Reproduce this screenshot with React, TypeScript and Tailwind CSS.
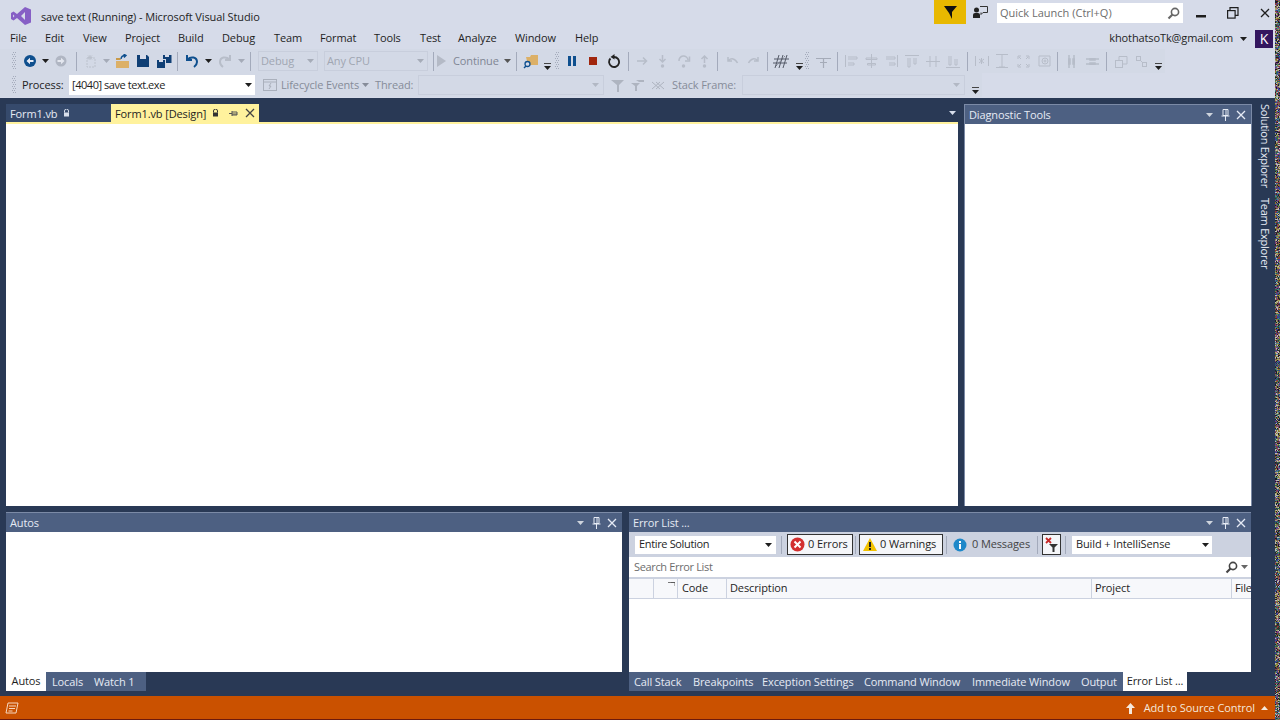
import React from "react";

const F = "font-['Open_Sans','Noto_Sans',sans-serif] text-[11px] tracking-[-0.12px] whitespace-nowrap";

function Caret({ c = "#1e1e1e", className = "" }: { c?: string; className?: string }) {
  return (
    <svg width="7" height="4" viewBox="0 0 7 4" className={`shrink-0 ${className}`}>
      <path d="M0 0h7L3.500 4z" fill={c} />
    </svg>
  );
}
function Overflow() {
  return (
    <svg width="7" height="7" viewBox="0 0 7 7" className="shrink-0 mt-[10px]">
      <rect x="0" y="0" width="7" height="1" fill="#444" />
      <path d="M0 3h7L3.500 7z" fill="#1e1e1e" />
    </svg>
  );
}
function Grip() {
  return (
    <svg width="5" height="18" viewBox="0 0 5 18" className="shrink-0">
      {Array.from({ length: 9 }).map((_, i) => (
        <g key={i} fill="#a4abbb">
          <rect x={i % 2 ? 0 : 1} y={i * 2} width="1" height="1" />
          <rect x={i % 2 ? 2 : 3} y={i * 2} width="1" height="1" />
        </g>
      ))}
    </svg>
  );
}
function Sep() {
  return <div className="w-px h-[19px] bg-[#a3aabb] shrink-0" />;
}
function C({ w, children }: { w: string; children?: React.ReactNode }) {
  return <div className={`${w} h-full flex items-center justify-center shrink-0`}>{children}</div>;
}
function Pin({ c = "#e6ebf5" }: { c?: string }) {
  return (
    <svg width="9" height="12" viewBox="0 0 9 12">
      <path d="M2 .5h5v6H2zM.5 7h8M4.500 7v5M5 1v5" stroke={c} fill="none" strokeWidth="1" />
    </svg>
  );
}
function Cross({ c = "#e6ebf5", s = 10 }: { c?: string; s?: number }) {
  return (
    <svg width={s} height={s} viewBox="0 0 10 10">
      <path d="M1 1l8 8M9 1l-8 8" stroke={c} strokeWidth="1.300" fill="none" />
    </svg>
  );
}
function Lock({ c = "#d7deeb" }: { c?: string }) {
  return (
    <svg width="7" height="8" viewBox="0 0 7 8">
      <path d="M1.500 3.500V2a2 2 0 0 1 4 0v1.500" stroke={c} fill="none" />
      <rect x="1" y="3.500" width="5" height="4" fill={c} />
    </svg>
  );
}
function Magnifier({ c = "#555" }: { c?: string }) {
  return (
    <svg width="13" height="13" viewBox="0 0 13 13" className="shrink-0">
      <circle cx="8" cy="5" r="3.600" stroke={c} strokeWidth="1.600" fill="none" />
      <path d="M5.500 7.500L1.500 11.500" stroke={c} strokeWidth="2.200" />
    </svg>
  );
}

function PanelHeader({ title }: { title: string }) {
  return (
    <div className="h-[19px] bg-[#4d6082] flex items-center pl-[4px] pr-[5px] shrink-0">
      <span className="leading-none text-[#e6ebf5] flex-1">{title}</span>
      <Caret c="#ced4dd" />
      <span className="ml-[8px] flex"><Pin /></span>
      <span className="ml-[6px] flex"><Cross /></span>
    </div>
  );
}

function Noise() {
  const colors = ["#7a3f7f", "#2c6a4c", "#8a7d2e", "#38459c", "#b9b9b9", "#8f3a3a", "#1b1b2b", "#4b8088", "#a7a26a", "#333"];
  let seed = 7;
  const rects: React.ReactNode[] = [];
  for (let y = 0; y < 720; y += 1) {
    for (let x = 0; x < 5; x += 1) {
      seed = (seed * 1103515245 + 12345) & 0x7fffffff;
      rects.push(<rect key={`${x}-${y}`} x={x} y={y} width="1" height="1" fill={colors[(seed >> 8) % colors.length]} />);
    }
  }
  return (
    <svg width="5" height="720" viewBox="0 0 5 720" className="absolute right-0 top-0">
      {rects}
    </svg>
  );
}

const menus: [string, string][] = [
  ["File", "w-[35px]"], ["Edit", "w-[38px]"], ["View", "w-[42px]"], ["Project", "w-[53px]"], ["Build", "w-[44px]"], ["Debug", "w-[52px]"],
  ["Team", "w-[46px]"], ["Format", "w-[54px]"], ["Tools", "w-[46px]"], ["Test", "w-[38px]"], ["Analyze", "w-[57px]"], ["Window", "w-[60px]"], ["Help", "w-[40px]"],
];

function Dbtn({ w, label }: { w: string; label: string }) {
  return (
    <div className={`${w} h-[20px] border border-[#c8cedc] flex items-center pl-[2px] pr-[3px] text-[#a0a6b2] shrink-0`}>
      <span className="flex-1">{label}</span>
      <Caret c="#a6acb8" />
    </div>
  );
}

function Toolbar1() {
  const gray = "#a5abb8";
  const dim = "#b7bdc9";
  return (
    <div className="h-[24px] flex items-center pl-[8px] w-[1165px] bg-[#d3d9e6]">
      <C w="w-[12px]"><Grip /></C>
      <C w="w-[20px]">
        <svg width="12" height="12" viewBox="0 0 12 12">
          <circle cx="6" cy="6" r="6" fill="#0e4f8e" />
          <path d="M2.500 6L6 2.800V5h3.500v2H6v2.200z" fill="#e6ebf5" />
        </svg>
      </C>
      <C w="w-[10px]"><Caret /></C>
      <C w="w-[22px]">
        <svg width="12" height="12" viewBox="0 0 12 12">
          <circle cx="6" cy="6" r="5.500" fill="#b0b6c3" />
          <path d="M9.500 6L6 2.800V5H2.500v2H6v2.200z" fill="#e4e7ef" />
        </svg>
      </C>
      <C w="w-[8px]"><Sep /></C>
      <C w="w-[22px]">
        <svg width="14" height="14" viewBox="0 0 14 14">
          <path d="M3 4h8v9H3z" fill="none" stroke="#bcc2cd" strokeDasharray="2 1" />
          <path d="M6 1v5M3.500 3.500h5M4 1.500l4 4M8 1.500l-4 4" stroke="#bcc2cd" />
        </svg>
      </C>
      <C w="w-[8px]"><Caret c={gray} /></C>
      <C w="w-[24px]">
        <svg width="15" height="15" viewBox="0 0 15 15">
          <path d="M1 7h13v7H1z" fill="#dcb067" />
          <path d="M1 6V4h4l1 2z" fill="#c89a4a" />
          <path d="M6 5a4 4 0 0 1 4-3.500M8.500 0l2.500 1.500-2 2" stroke="#0e4f8e" fill="none" strokeWidth="1.400" />
        </svg>
      </C>
      <C w="w-[18px]">
        <svg width="12" height="12" viewBox="0 0 12 12">
          <path d="M0 0h10l2 2v10H0z" fill="#0f3f75" />
          <rect x="3" y="0" width="6" height="4" fill="#d6dbe9" />
        </svg>
      </C>
      <C w="w-[24px]">
        <svg width="15" height="13" viewBox="0 0 15 13">
          <path d="M0 5h8v8H0z" fill="#0f3f75" />
          <path d="M6 0h8.500v8H9V4H6z" fill="#0f3f75" />
          <rect x="2" y="5" width="4" height="2" fill="#d6dbe9" />
          <rect x="8" y="0" width="4" height="2" fill="#d6dbe9" />
        </svg>
      </C>
      <C w="w-[2px]"><Sep /></C>
      <C w="w-[28px]">
        <svg width="14" height="14" viewBox="0 0 14 14">
          <path d="M2 1v5h5" stroke="#0e4f8e" strokeWidth="2" fill="none" />
          <path d="M2.500 5.500C6 2 12 3 12 8c0 2-1 3.500-3 5" stroke="#0e4f8e" strokeWidth="2" fill="none" />
        </svg>
      </C>
      <C w="w-[4px]"><Caret /></C>
      <C w="w-[30px]">
        <svg width="14" height="14" viewBox="0 0 14 14">
          <path d="M12 1v5H7" stroke={dim} strokeWidth="2" fill="none" />
          <path d="M11.500 5.500C8 2 2 3 2 8c0 2 1 3.500 3 5" stroke={dim} strokeWidth="2" fill="none" />
        </svg>
      </C>
      <C w="w-[2px]"><Caret c={gray} /></C>
      <C w="w-[16px]"><Sep /></C>
      <Dbtn w="w-[60px]" label="Debug" />
      <div className="w-[6px] shrink-0" />
      <Dbtn w="w-[104px]" label="Any CPU" />
      <C w="w-[10px]"><Sep /></C>
      <C w="w-[6px]">
        <svg width="9" height="12" viewBox="0 0 9 12" className="shrink-0"><path d="M0 0l9 6-9 6z" fill="#b4bac6" /></svg>
      </C>
      <div className="w-[60px] shrink-0 pl-[9px] text-[#7f8694]">Continue</div>
      <C w="w-[6px]"><Caret c="#555" /></C>
      <C w="w-[12px]"><Sep /></C>
      <C w="w-[18px]">
        <svg width="16" height="15" viewBox="0 0 16 15">
          <path d="M3 3h4l1-2h7v10H5z" fill="#dcb067" />
          <circle cx="4.500" cy="10" r="2.500" stroke="#0e4f8e" strokeWidth="1.300" fill="#d6dbe9" />
          <path d="M3 12l-2 2" stroke="#0e4f8e" strokeWidth="1.500" />
        </svg>
      </C>
      <C w="w-[14px]"><Overflow /></C>
      <C w="w-[6px]"><Grip /></C>
      <C w="w-[24px]">
        <svg width="8" height="10" viewBox="0 0 8 10">
          <rect width="3" height="10" fill="#0e4f8e" />
          <rect x="5" width="3" height="10" fill="#0e4f8e" />
        </svg>
      </C>
      <C w="w-[18px]"><div className="w-[8px] h-[8px] bg-[#a1260d]" /></C>
      <C w="w-[24px]">
        <svg width="14" height="14" viewBox="0 0 14 14">
          <path d="M3.500 4.500A5 5 0 1 0 7 3" stroke="#222" strokeWidth="1.800" fill="none" />
          <path d="M7.500 0v5.500L3.500 3z" fill="#222" />
        </svg>
      </C>
      <C w="w-[4px]"><Sep /></C>
      <C w="w-[24px]">
        <svg width="12" height="12" viewBox="0 0 12 12" fill="none" stroke={dim} strokeWidth="1.500"><path d="M1 6h9M7 2.500L10.500 6 7 9.500" /></svg>
      </C>
      <C w="w-[16px]">
        <svg width="9" height="13" viewBox="0 0 9 13" fill="none" stroke={dim} strokeWidth="1.500"><path d="M4.500 0v6M1.500 4l3 3 3-3" /><circle cx="4.500" cy="11" r="1" fill={dim} /></svg>
      </C>
      <C w="w-[28px]">
        <svg width="13" height="13" viewBox="0 0 13 13" fill="none" stroke={dim} strokeWidth="1.500"><path d="M1 6a4.500 4.500 0 0 1 9-1M11.500 1.500V6H7" /><circle cx="5.500" cy="11" r="1" fill={dim} /></svg>
      </C>
      <C w="w-[12px]">
        <svg width="9" height="13" viewBox="0 0 9 13" fill="none" stroke={dim} strokeWidth="1.500"><path d="M4.500 8V1M1.500 4l3-3 3 3" /><circle cx="4.500" cy="11" r="1" fill={dim} /></svg>
      </C>
      <C w="w-[14px]"><Sep /></C>
      <C w="w-[16px]">
        <svg width="13" height="10" viewBox="0 0 13 10" fill="none" stroke={dim} strokeWidth="1.500"><path d="M2 1v4h4M2.500 4.500C5 2 9 2 11.500 7" /></svg>
      </C>
      <C w="w-[26px]">
        <svg width="13" height="10" viewBox="0 0 13 10" fill="none" stroke={dim} strokeWidth="1.500"><path d="M11 1v4H7M10.500 4.500C8 2 4 2 1.500 7" /></svg>
      </C>
      <C w="w-[2px]"><Sep /></C>
      <C w="w-[26px]">
        <svg width="17" height="15" viewBox="0 0 17 15" fill="none" stroke="#555b68">
          <path d="M6 1L2 14M10 1L6 14M14 1l-4 13M1 5h15M0 9h14" />
          <path d="M3 12l9-10" strokeDasharray="1 1" />
        </svg>
      </C>
      <C w="w-[10px]"><Overflow /></C>
      <C w="w-[6px]"><Grip /></C>
      <C w="w-[26px]">
        <svg width="15" height="13" viewBox="0 0 15 13" fill="none" stroke={gray}><path d="M0 3.500h15M7.500 3.500V13M4 7.500h7" strokeWidth="1.200" /></svg>
      </C>
      <C w="w-[2px]"><Sep /></C>
      <C w="w-[26px]">
        <svg width="13" height="14" viewBox="0 0 13 14" fill="none" stroke={dim}><path d="M.5 1v12M3 3h9v2H3M3 9h6v2H3" /></svg>
      </C>
      <C w="w-[14px]">
        <svg width="13" height="14" viewBox="0 0 13 14" fill="none" stroke={dim}><path d="M6.500 0v14M1 4h11v1.500H1zM2.500 9.500h8V11h-8z" /></svg>
      </C>
      <C w="w-[26px]">
        <svg width="13" height="14" viewBox="0 0 13 14" fill="none" stroke={dim}><path d="M12.500 1v12M1 3h9v2H1M4 9h6v2H4" /></svg>
      </C>
      <C w="w-[16px]">
        <svg width="14" height="13" viewBox="0 0 14 13" fill="none" stroke={dim}><path d="M0 .5h14M3 3v9h2V3M9 3v6h2V3" /></svg>
      </C>
      <C w="w-[26px]">
        <svg width="14" height="13" viewBox="0 0 14 13" fill="none" stroke={dim}><path d="M0 6.500h14M4 1v11M10 1v11" /></svg>
      </C>
      <C w="w-[14px]">
        <svg width="14" height="13" viewBox="0 0 14 13" fill="none" stroke={dim}><path d="M0 12.500h14M3 1v9h2V1M9 4v6h2V4" /></svg>
      </C>
      <C w="w-[14px]"><Sep /></C>
      <C w="w-[16px]">
        <svg width="14" height="12" viewBox="0 0 14 12" fill="none" stroke={dim}><path d="M.5 1v10M13.500 1v10M4 4l5 4M9 4L4 8M6.500 3v6" /></svg>
      </C>
      <C w="w-[24px]">
        <svg width="14" height="14" viewBox="0 0 14 14" fill="none" stroke={dim}><path d="M1 .5h12M1 13.500h12M7 1v12M4 13h6" /></svg>
      </C>
      <C w="w-[18px]">
        <svg width="13" height="13" viewBox="0 0 13 13" fill="none" stroke={dim}><path d="M1 4V1h3M9 1h3v3M1 9v3h3M12 9v3H9M2 2l2 2M11 2L9 4M2 11l2-2M11 11L9 9" /></svg>
      </C>
      <C w="w-[24px]">
        <svg width="13" height="14" viewBox="0 0 13 14" fill="none" stroke={dim}><path d="M1 2h11v10H1z" /><circle cx="7" cy="7" r="3" /><circle cx="7" cy="7" r="1" /></svg>
      </C>
      <C w="w-[2px]"><Sep /></C>
      <C w="w-[26px]">
        <svg width="7" height="13" viewBox="0 0 7 13" fill="none" stroke={dim} strokeWidth="1.500"><path d="M1 0v13M6 0v13" /><rect x="0" y="4" width="2" height="5" fill={dim} /><rect x="5" y="4" width="2" height="5" fill={dim} /></svg>
      </C>
      <C w="w-[16px]">
        <svg width="13" height="7" viewBox="0 0 13 7" fill="none" stroke={dim} strokeWidth="1.500"><path d="M0 1h13M0 6h13" /><rect x="4" y="0" width="5" height="2" fill={dim} /><rect x="4" y="5" width="5" height="2" fill={dim} /></svg>
      </C>
      <C w="w-[12px]"><Sep /></C>
      <C w="w-[18px]">
        <svg width="13" height="13" viewBox="0 0 13 13" fill="none" stroke={dim}><rect x=".5" y="5.500" width="7" height="7" /><path d="M4 5V1.500h8V9H8" /></svg>
      </C>
      <C w="w-[22px]">
        <svg width="11" height="11" viewBox="0 0 11 11" fill="none" stroke={dim}><rect x=".5" y=".5" width="4" height="4" /><rect x="6.500" y="6.500" width="4" height="4" /><path d="M4 4l3 3" /></svg>
      </C>
      <C w="w-[12px]"><Overflow /></C>
    </div>
  );
}

function Toolbar2() {
  const dim = "#aeb4c0";
  return (
    <div className="h-[24px] flex items-center pl-[12px] w-[982px] bg-[#d3d9e6]">
      <Grip />
      <span className="ml-[5px] w-[47px] shrink-0 text-[#222]">Process:</span>
      <div className="w-[186px] h-[20px] bg-white flex items-center pl-[3px] pr-[3px] text-[#1e1e1e] shrink-0">
        <span className="flex-1 tracking-[-0.45px]">[4040] save text.exe</span>
        <Caret />
      </div>
      <svg width="14" height="12" viewBox="0 0 14 12" className="ml-[8px] shrink-0" fill="none" stroke="#aab0bc">
        <rect x="0.500" y="0.500" width="13" height="11" />
        <path d="M0 3h14M8 4L6 7h2l-2 3" />
      </svg>
      <span className="ml-[4px] w-[81px] shrink-0 text-[#868c99]">Lifecycle Events</span>
      <Caret c="#868c99" />
      <span className="ml-[6px] w-[43px] shrink-0 text-[#868c99]">Thread:</span>
      <div className="w-[186px] h-[20px] border border-[#c8cedc] flex items-center justify-end pr-[4px] shrink-0">
        <Caret c="#b2b8c4" />
      </div>
      <C w="w-[26px]">
        <svg width="13" height="13" viewBox="0 0 13 13" fill={dim}><path d="M0 1h13L8 6v7H6V6z" /></svg>
      </C>
      <C w="w-[14px]">
        <svg width="13" height="12" viewBox="0 0 13 12" fill={dim}><path d="M0 4h9L6 7v5H4V7zM5 1h8v2H8z" /></svg>
      </C>
      <C w="w-[28px]">
        <svg width="14" height="9" viewBox="0 0 14 9" fill="none" stroke={dim}><path d="M1 1l8 7M9 1L1 8M5 1l8 7M13 1L5 8" /></svg>
      </C>
      <span className="w-[70px] shrink-0 text-[#868c99]">Stack Frame:</span>
      <div className="w-[223px] h-[20px] border border-[#c8cedc] flex items-center justify-end pr-[4px] shrink-0">
        <Caret c="#b2b8c4" />
      </div>
      <C w="w-[20px]"><Overflow /></C>
    </div>
  );
}

export default function App() {
  return (
    <div className={`${F} relative w-[1280px] h-[720px] overflow-hidden flex flex-col bg-[#293955]`}>
      {/* Chrome */}
      <div className="h-[98px] shrink-0 bg-[#d6dbe9] flex flex-col">
        <div className="h-[28px] flex items-start">
          <svg width="20" height="18" viewBox="0 0 20 18" className="ml-[11px] mt-[7px] shrink-0">
            <path d="M14 0l6 2.500v13L14 18 6 11l-3.500 2.500L0 12V6l2.500-1.500L6 7zM14 5l-4 4 4 4z" fill="#865fc5" />
            <path d="M2 7.500v3L3.500 9z" fill="#d6dbe9" />
          </svg>
          <span className="ml-[10px] mt-[8px] leading-[17px] text-[#1e1e1e]">save text (Running) - Microsoft Visual Studio</span>
          <div className="flex-1" />
          <div className="w-[32px] h-[24px] bg-[#e8b800] flex items-center justify-center mr-[7px]">
            <svg width="13" height="13" viewBox="0 0 13 13"><path d="M0 0h13L8 6v7L5 7z" fill="#111" /></svg>
          </div>
          <svg width="15" height="13" viewBox="0 0 15 13" className="mt-[6px] mr-[9px] shrink-0">
            <circle cx="3.500" cy="4" r="2.500" fill="#222" />
            <path d="M0 12V9a2 2 0 0 1 2-2h3a2 2 0 0 1 2 2v3z" fill="#222" />
            <path d="M7 .5h7.500v6H10l-2 2v-2" stroke="#333" fill="none" />
          </svg>
          <div className="w-[186px] h-[20px] mt-[3px] bg-white flex items-center pl-[3px] pr-[3px] text-[#6d6d6d]">
            <span className="flex-1 tracking-[0px]">Quick Launch (Ctrl+Q)</span>
            <Magnifier c="#666" />
          </div>
          <svg width="12" height="12" viewBox="0 0 12 12" className="ml-[12px] mt-[9px] shrink-0"><rect x="1" y="6" width="10" height="2.500" fill="#1e1e1e" /></svg>
          <svg width="12" height="12" viewBox="0 0 12 12" className="ml-[20px] mt-[7px] shrink-0" fill="none" stroke="#1e1e1e" strokeWidth="1.200">
            <rect x="0.600" y="3.600" width="7.500" height="7.500" />
            <path d="M3 3.500V.7h8v7.600H8" />
          </svg>
          <span className="ml-[21px] mt-[8px] mr-[10px] flex"><Cross c="#1e1e1e" /></span>
        </div>
        <div className="h-[21px] flex items-center">
          <div className="flex-1 flex items-center h-full pl-[10px] text-[#1e1e1e]">
            {menus.map(([m, w]) => <span key={m} className={`${w} shrink-0`}>{m}</span>)}
          </div>
          <span className="text-[#1e1e1e]">khothatsoTk@gmail.com</span>
          <Caret className="ml-[7px]" />
          <div className="ml-[8px] mr-[7px] w-[18px] h-[18px] bg-[#33165e] text-white text-[14px] leading-[18px] text-center">K</div>
        </div>
        <Toolbar1 />
        <Toolbar2 />
      </div>

      {/* Work area */}
      <div className="flex-1 flex flex-col pt-[6px] pl-[6px] min-h-0">
        <div className="h-[402px] flex gap-[6px] shrink-0">
          <div className="w-[952px] flex flex-col shrink-0">
            <div className="h-[18px] flex items-stretch shrink-0">
              <div className="w-[105px] bg-[#364a6c] flex items-center pl-[4px] text-[#e6ebf5] leading-none">
                Form1.vb <span className="ml-[6px] flex"><Lock /></span>
              </div>
              <div className="w-[148px] bg-[#fff29d] flex items-center pl-[4px] leading-none text-[#1e1e1e]">
                Form1.vb [Design]
                <span className="ml-[6px] flex"><Lock c="#333" /></span>
                <span className="ml-[10px] flex">
                  <svg width="9" height="7" viewBox="0 0 9 7"><path d="M0 3.500h3M3 1v5M3 2h5v3H3M3 4h5" stroke="#555" fill="none" /></svg>
                </span>
                <span className="ml-[7px] flex"><Cross c="#444" /></span>
              </div>
              <div className="flex-1 flex items-center justify-end pr-[2px]"><Caret c="#d7deeb" /></div>
            </div>
            <div className="h-[2px] bg-[#fff29d] shrink-0" />
            <div className="flex-1 bg-white" />
          </div>
          <div className="w-[288px] flex flex-col shrink-0 border border-[#7b8aa6] border-b-0">
            <PanelHeader title="Diagnostic Tools" />
            <div className="flex-1 bg-white" />
          </div>
        </div>
        <div className="flex gap-[7px] mt-[6px] h-[179px] shrink-0">
          <div className="w-[616px] flex flex-col shrink-0 border-t border-[#7b8aa6]">
            <PanelHeader title="Autos" />
            <div className="flex-1 bg-white" />
            <div className="h-[19px] flex shrink-0">
              <div className="w-[40px] bg-white text-[#1e1e1e] flex items-center justify-center">Autos</div>
              <div className="w-[100px] bg-[#4d6082] text-[#e6ebf5] flex items-center pl-[6px] pt-px">
                <span className="w-[42px] shrink-0">Locals</span><span>Watch 1</span>
              </div>
            </div>
          </div>
          <div className="w-[622px] flex flex-col shrink-0 border-t border-[#7b8aa6]">
            <PanelHeader title="Error List ..." />
            <div className="h-[25px] bg-[#ccd2e0] flex items-center pl-[6px] shrink-0 text-[#1e1e1e]">
              <div className="w-[141px] h-[18px] bg-white flex items-center pl-[4px] pr-[4px] shrink-0">
                <span className="flex-1 tracking-[-0.35px]">Entire Solution</span><Caret />
              </div>
              <div className="ml-[5px] w-px h-[18px] bg-[#a3aabb] shrink-0" />
              <div className="ml-[5px] h-[21px] w-[66px] bg-[#f5f6f9] border border-[#333] flex items-center pl-[2px] gap-[3px] shrink-0">
                <svg width="15" height="15" viewBox="0 0 15 15" className="shrink-0"><circle cx="7.500" cy="7.500" r="7" fill="#d32f2f" /><path d="M4.500 4.500l6 6M10.500 4.500l-6 6" stroke="#fff" strokeWidth="2" /></svg>
                <span>0 Errors</span>
              </div>
              <div className="ml-[2px] w-px h-[18px] bg-[#a3aabb] shrink-0" />
              <div className="ml-[3px] h-[21px] w-[84px] bg-[#f5f6f9] border border-[#333] flex items-center pl-[3px] gap-[3px] shrink-0">
                <svg width="14" height="13" viewBox="0 0 14 13" className="shrink-0"><path d="M7 0l7 13H0z" fill="#f2c200" /><rect x="6" y="4" width="2" height="5" fill="#222" /><rect x="6" y="10" width="2" height="2" fill="#222" /></svg>
                <span>0 Warnings</span>
              </div>
              <div className="ml-[3px] w-px h-[18px] bg-[#a3aabb] shrink-0" />
              <div className="ml-[6px] w-[75px] flex items-center gap-[5px] text-[#444] shrink-0">
                <svg width="14" height="14" viewBox="0 0 14 14" className="shrink-0"><circle cx="7" cy="7" r="6.500" fill="#1e88c9" /><rect x="6" y="6" width="2" height="5" fill="#fff" /><rect x="6" y="3" width="2" height="2" fill="#fff" /></svg>
                <span>0 Messages</span>
              </div>
              <div className="ml-[9px] w-px h-[18px] bg-[#a3aabb] shrink-0" />
              <div className="ml-[4px] w-[19px] h-[21px] bg-[#f5f6f9] border border-[#333] flex items-center justify-center shrink-0">
                <svg width="13" height="15" viewBox="0 0 13 15">
                  <path d="M1 1l5 5M6 1L1 6" stroke="#c62828" strokeWidth="1.800" />
                  <path d="M4 7h9L9.500 10.500V15h-2v-4.500z" fill="#333" />
                </svg>
              </div>
              <div className="ml-[4px] w-px h-[18px] bg-[#a3aabb] shrink-0" />
              <div className="ml-[6px] w-[140px] h-[18px] bg-white flex items-center pl-[4px] pr-[3px] shrink-0">
                <span className="flex-1">Build + IntelliSense</span><Caret />
              </div>
            </div>
            <div className="h-[20px] bg-white flex items-center pl-[5px] pr-[3px] shrink-0 text-[#6d6d6d]">
              <span className="flex-1 tracking-[-0.35px]">Search Error List</span>
              <Magnifier c="#444" />
              <Caret c="#666" className="ml-[3px]" />
            </div>
            <div className="h-[2px] bg-[#ccd2e0] shrink-0" />
            <div className="h-[20px] bg-[#f7f8fb] border-b border-[#ccd2e0] flex items-stretch shrink-0 text-[#1e1e1e] overflow-hidden">
              <div className="w-[25px] border-r border-[#ccd2e0] shrink-0" />
              <div className="w-[24px] border-r border-[#ccd2e0] flex justify-end pr-[2px] pt-[3px] shrink-0">
                <svg width="7" height="4" viewBox="0 0 7 4"><path d="M0 .5h7M3 .5h4V4" stroke="#555" fill="none" strokeWidth=".8" /></svg>
              </div>
              <div className="w-[49px] border-r border-[#ccd2e0] pl-[4px] flex items-center shrink-0">Code</div>
              <div className="w-[365px] border-r border-[#ccd2e0] pl-[3px] flex items-center shrink-0">Description</div>
              <div className="w-[140px] border-r border-[#ccd2e0] pl-[3px] flex items-center shrink-0">Project</div>
              <div className="flex-1 pl-[3px] flex items-center">File</div>
            </div>
            <div className="flex-1 bg-white" />
            <div className="h-[19px] flex shrink-0">
              <div className="w-[494px] bg-[#4d6082] text-[#e6ebf5] flex items-center pl-[5px] pt-px shrink-0">
                <span className="w-[59px] shrink-0">Call Stack</span>
                <span className="w-[69px] shrink-0">Breakpoints</span>
                <span className="w-[102px] shrink-0">Exception Settings</span>
                <span className="w-[108px] shrink-0">Command Window</span>
                <span className="w-[109px] shrink-0">Immediate Window</span>
                <span>Output</span>
              </div>
              <div className="w-[64px] bg-white text-[#1e1e1e] flex items-center justify-center">Error List ...</div>
            </div>
          </div>
        </div>
      </div>

      {/* Status bar */}
      <div className="h-[24px] shrink-0 bg-[#ca5100] border-b border-[#6d1a0d] flex items-center pl-[5px] pr-[12px] pt-px">
        <svg width="14" height="12" viewBox="0 0 14 12" fill="none" stroke="#f6d7bf" className="shrink-0">
          <path d="M3 1h10l-2 10H1zM4 4h7M4 6.500h6M3.500 9h4" />
        </svg>
        <div className="flex-1" />
        <svg width="9" height="11" viewBox="0 0 9 11" fill="#f5e8dc" className="mr-[9px] shrink-0"><path d="M4.500 0L9 5H6v6H3V5H0z" /></svg>
        <span className="text-[#f5e8dc] tracking-[-0.08px]">Add to Source Control</span>
        <svg width="7" height="4" viewBox="0 0 7 4" className="ml-[6px] shrink-0"><path d="M0 4h7L3.500 0z" fill="#f5e8dc" /></svg>
      </div>

      {/* Side rail labels */}
      <div className="absolute left-[1254px] top-[104px] w-[23px] flex flex-col items-center gap-[10px] text-[#e6ebf5] tracking-[-0.25px]">
        <span className="leading-[23px] [writing-mode:vertical-rl]">Solution Explorer</span>
        <span className="leading-[23px] [writing-mode:vertical-rl]">Team Explorer</span>
      </div>
      <Noise />
    </div>
  );
}
